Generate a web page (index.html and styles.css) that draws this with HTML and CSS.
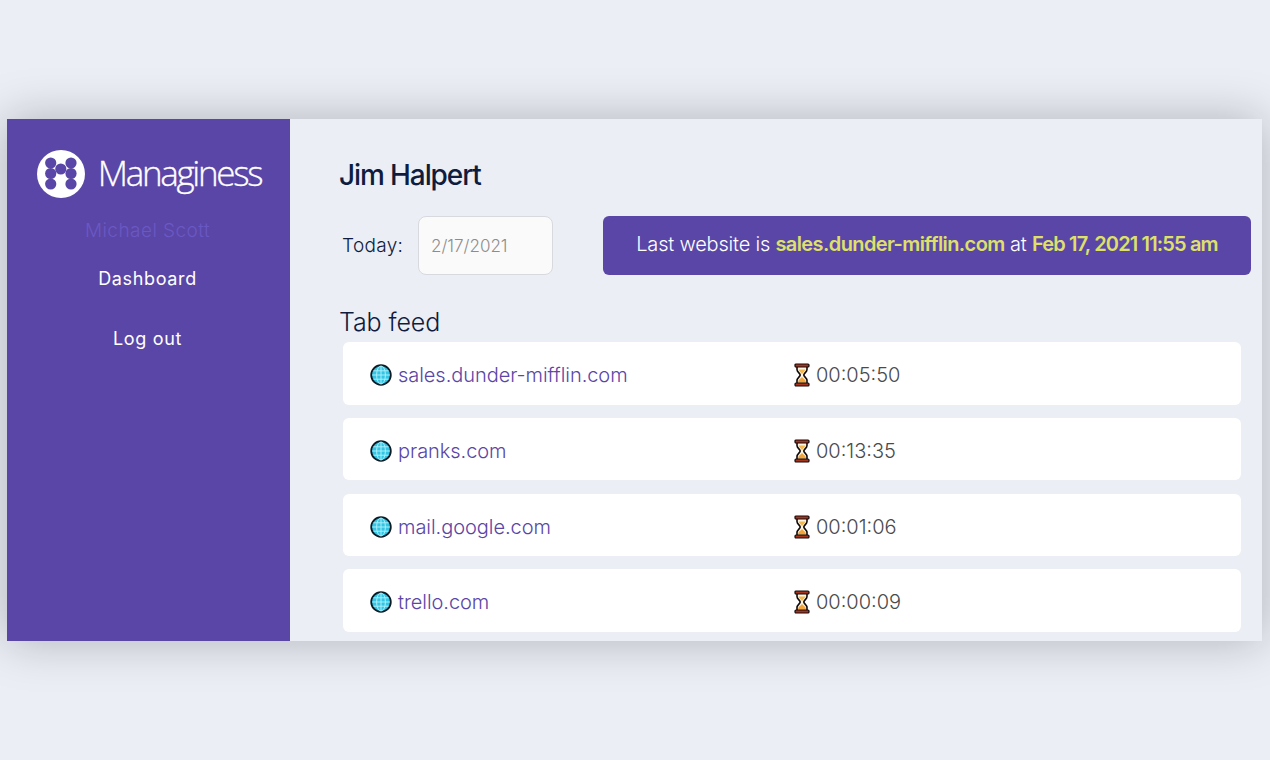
FILE: index.html
```html
<!DOCTYPE html>
<html lang="en">
<head>
    <meta charset="UTF-8">
    <meta name="viewport" content="width=device-width, initial-scale=1.0">
    <title>Managiness</title>
    <link rel="stylesheet" href="styles.css">
</head>
<body>
    <svg class="icon-defs" width="0" height="0" aria-hidden="true">
        <symbol id="globe" viewBox="0 0 22 22">
            <circle cx="11" cy="11" r="9.8" fill="#34c4e4" stroke="#0c1a24" stroke-width="1.8"/>
            <g fill="none" stroke="#a8f0fb" stroke-width="1">
                <ellipse cx="11" cy="11" rx="4.4" ry="9"/>
                <path d="M11 2v18M2.2 11h17.600M3.4 6.800h15.200M3.4 15.200h15.200"/>
            </g>
        </symbol>
        <symbol id="hourglass" viewBox="0 0 18 24">
            <path d="M4 3h10v3.500c0 2.600-3.200 3.900-3.200 5.500s3.200 2.900 3.200 5.500V21H4v-3.500c0-2.600 3.200-3.900 3.200-5.500S4 9.100 4 6.500z" fill="#fdf6e3" stroke="#120a0a" stroke-width="1.600"/>
            <path d="M5.600 6.500h6.800c-.6 2-2.600 3.100-3.400 4.800C8.200 9.600 6.200 8.500 5.600 6.500z" fill="#f6b84e"/>
            <path d="M5.200 19.800v-1.500c.5-1.800 2.800-2.900 3.800-4.300 1 1.400 3.300 2.500 3.800 4.300v1.500z" fill="#f2a53c"/>
            <rect x="2" y="1" width="14" height="3" rx="1" fill="#a8331f" stroke="#120a0a" stroke-width="1.200"/>
            <rect x="2" y="20" width="14" height="3" rx="1" fill="#a8331f" stroke="#120a0a" stroke-width="1.200"/>
        </symbol>
    </svg>

    <div class="window">
        <aside class="sidebar">
            <div class="logo">
                <svg class="logo-mark" viewBox="0 0 48 48" aria-hidden="true">
                    <circle cx="24" cy="24" r="24" fill="#fff"/>
                    <g fill="#5a46a6">
                        <circle cx="13.700" cy="13" r="5.600"/>
                        <circle cx="34" cy="13" r="5.600"/>
                        <circle cx="13.700" cy="23.500" r="5.600"/>
                        <circle cx="34" cy="23.500" r="5.600"/>
                        <circle cx="13.700" cy="34" r="5.600"/>
                        <circle cx="34" cy="34" r="5.600"/>
                        <circle cx="23.800" cy="19" r="5.600"/>
                    </g>
                </svg>
                <span class="logo-text">Managiness</span>
            </div>
            <p class="user-name">Michael Scott</p>
            <a class="nav-link nav-first" href="#">Dashboard</a>
            <a class="nav-link" href="#">Log out</a>
        </aside>

        <main class="content">
            <h1>Jim Halpert</h1>
            <div class="top-row">
                <label class="today-label" for="today">Today:</label>
                <input class="today-input" id="today" type="text" value="2/17/2021" disabled>
                <div class="last-site">Last website is <b>sales.dunder-mifflin.com</b> at <b class="last-date">Feb 17, 2021 11:55 am</b></div>
            </div>
            <h2>Tab feed</h2>
            <div class="feed">
                <div class="feed-row">
                    <span class="site"><svg class="globe"><use href="#globe"/></svg><a href="#">sales.dunder-mifflin.com</a></span>
                    <span class="time"><svg class="hourglass"><use href="#hourglass"/></svg>00:05:50</span>
                </div>
                <div class="feed-row">
                    <span class="site"><svg class="globe"><use href="#globe"/></svg><a href="#">pranks.com</a></span>
                    <span class="time"><svg class="hourglass"><use href="#hourglass"/></svg>00:13:35</span>
                </div>
                <div class="feed-row">
                    <span class="site"><svg class="globe"><use href="#globe"/></svg><a href="#">mail.google.com</a></span>
                    <span class="time"><svg class="hourglass"><use href="#hourglass"/></svg>00:01:06</span>
                </div>
                <div class="feed-row">
                    <span class="site"><svg class="globe"><use href="#globe"/></svg><a href="#">trello.com</a></span>
                    <span class="time"><svg class="hourglass"><use href="#hourglass"/></svg>00:00:09</span>
                </div>
            </div>
        </main>
    </div>
</body>
</html>
```

FILE: styles.css
```css
* {
    box-sizing: border-box;
}

body {
    margin: 0;
    height: 760px;
    overflow: hidden;
    background: #ebeef5;
    font-family: "Inter", "Liberation Sans", sans-serif;
    color: #0f1c3f;
}

.icon-defs {
    display: block;
}

.window {
    display: flex;
    width: 1255px;
    height: 522px;
    margin: 119px 0 0 7px;
    overflow: hidden;
    background: #ebeef5;
    box-shadow: 0 0 45px rgba(0, 0, 0, 0.25);
}

.sidebar {
    flex: 0 0 283px;
    display: flex;
    flex-direction: column;
    align-items: center;
    padding-right: 2px;
    background: #5a46a6;
}

.logo {
    display: flex;
    align-items: center;
    gap: 13px;
    margin-top: 31px;
    margin-left: 3px;
    height: 48px;
}

.logo-mark {
    width: 48px;
    height: 48px;
}

.logo-text {
    position: relative;
    top: -2px;
    font-family: "Open Sans", sans-serif;
    font-weight: 300;
    font-size: 35px;
    letter-spacing: -2.3px;
    -webkit-text-stroke: 0.3px #fff;
    color: #fff;
}

.user-name {
    margin: 21px 0 0;
    font-size: 19px;
    font-weight: 300;
    line-height: 24px;
    letter-spacing: 0.45px;
    color: #6a58c4;
}

.nav-link {
    font-size: 18px;
    line-height: 24px;
    letter-spacing: 0.65px;
    color: #fff;
    text-decoration: none;
    margin-top: 36px;
}

.nav-first {
    margin-top: 24px;
}

.content {
    flex: 1;
    min-width: 0;
    padding: 38px 11px 0 50px;
}

h1 {
    margin: 0 0 0 -1px;
    font-size: 28px;
    font-weight: 500;
    line-height: 36px;
    letter-spacing: -1.1px;
}

.top-row {
    display: flex;
    align-items: center;
    margin-top: 23px;
}

.today-label {
    margin-left: 2px;
    width: 76px;
    font-size: 19px;
    font-weight: 300;
    letter-spacing: 0.3px;
}

.today-input {
    width: 135px;
    height: 59px;
    padding: 0 12px;
    border: 1px solid #d8d9de;
    border-radius: 8px;
    background: #fafafa;
    font: 300 17px "Inter", sans-serif;
    color: #8d8d8d;
}

.last-site {
    flex: 1;
    height: 59px;
    margin-left: 50px;
    border-radius: 6px;
    background: #5a46a6;
    color: #fff;
    font-size: 20px;
    font-weight: 300;
    line-height: 56px;
    letter-spacing: -0.2px;
    text-align: center;
    white-space: nowrap;
}

.last-site b {
    font-weight: 600;
    letter-spacing: -0.6px;
    color: #dfe06a;
}

.last-site .last-date {
    letter-spacing: -0.85px;
}

h2 {
    margin: 31px 0 4.3px -1px;
    font-size: 25px;
    font-weight: 300;
    line-height: 32px;
    letter-spacing: -0.1px;
}

.feed {
    display: flex;
    flex-direction: column;
    gap: 13.17px;
    margin-left: 3px;
    margin-right: 10px;
}

.feed-row {
    flex: 0 0 62.5px;
    display: flex;
    align-items: center;
    padding: 3.4px 0 0 27px;
    border-radius: 6px;
    background: #fff;
    font-size: 20px;
    font-weight: 300;
}

.site {
    display: flex;
    align-items: center;
    gap: 6px;
    width: 423px;
}

.site a {
    color: #5a46a6;
    text-decoration: none;
    letter-spacing: -0.05px;
}

.globe {
    width: 22px;
    height: 22px;
}

.time {
    display: flex;
    align-items: center;
    gap: 5px;
    color: #4a4a4a;
}

.hourglass {
    width: 18px;
    height: 24px;
}
```
